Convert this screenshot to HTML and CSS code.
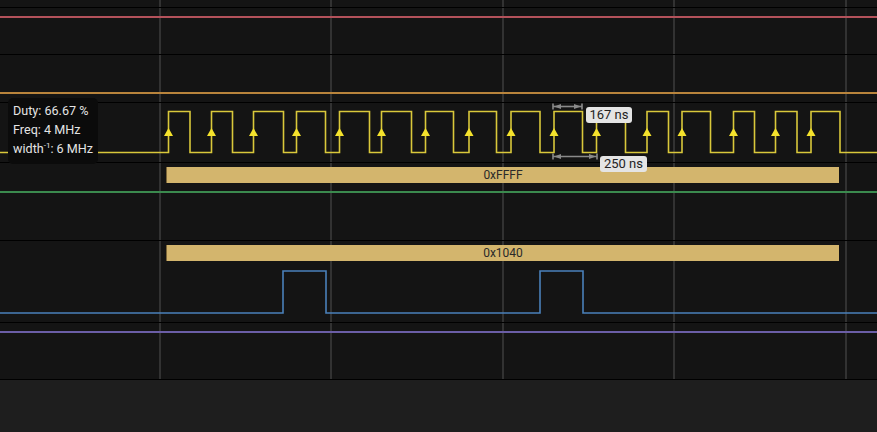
FILE: index.html
```html
<!DOCTYPE html>
<html>
<head>
<meta charset="utf-8">
<link rel="stylesheet" href="styles.css">
</head>
<body>
<div class="waves">
  <div class="row r0"></div>
  <div class="row r1"><div class="line red"></div></div>
  <div class="row r2"><div class="line orange"></div></div>
  <div class="row r3">
    <svg class="sig" width="877" height="59" viewBox="0 103 877 59">
      <path class="clk" d="M0 152.5 H168.5 V111.5 H190 V152.5 H211.5 V111.5 H232.5 V152.5 H253.5 V111.5 H283.5 V152.5 H296.5 V111.5 H325.5 V152.5 H339.5 V111.5 H369.5 V152.5 H381.5 V111.5 H411.5 V152.5 H425.5 V111.5 H453.5 V152.5 H469 V111.5 H496.5 V152.5 H511 V111.5 H540 V152.5 H554 V111.5 H582.5 V152.5 H596.5 V111.5 H625.5 V152.5 H647 V111.5 H668.5 V152.5 H682 V111.5 H710.5 V152.5 H733.5 V111.5 H754.5 V152.5 H775.5 V111.5 H797 V152.5 H811 V111.5 H840 V152.5 H877"/>
      <g class="tri">
        <polygon points="168.5,128 164,136 173,136"/>
        <polygon points="211.5,128 207,136 216,136"/>
        <polygon points="253.5,128 249,136 258,136"/>
        <polygon points="296.5,128 292,136 301,136"/>
        <polygon points="339.5,128 335,136 344,136"/>
        <polygon points="381.5,128 377,136 386,136"/>
        <polygon points="425.5,128 421,136 430,136"/>
        <polygon points="469,128 464.5,136 473.5,136"/>
        <polygon points="511,128 506.5,136 515.5,136"/>
        <polygon points="554,128 549.5,136 558.5,136"/>
        <polygon points="596.5,128 592,136 601,136"/>
        <polygon points="647,128 642.5,136 651.5,136"/>
        <polygon points="682,128 677.5,136 686.5,136"/>
        <polygon points="733.5,128 729,136 738,136"/>
        <polygon points="775.5,128 771,136 780,136"/>
        <polygon points="811,128 806.5,136 815.5,136"/>
      </g>
      <g class="meas">
        <line x1="553" y1="106.5" x2="582" y2="106.5"/>
        <line x1="553" y1="103.5" x2="553" y2="109.5"/>
        <line x1="582" y1="103.5" x2="582" y2="109.5"/>
        <polygon points="554,106.5 561,104 561,109"/>
        <polygon points="581,106.5 574,104 574,109"/>
        <line x1="553" y1="156.5" x2="597" y2="156.5"/>
        <line x1="553" y1="153.5" x2="553" y2="159.5"/>
        <line x1="597" y1="153.5" x2="597" y2="159.5"/>
        <polygon points="554,156.5 561,154 561,159"/>
        <polygon points="596,156.5 589,154 589,159"/>
      </g>
    </svg>
  </div>
  <div class="row r4">
    <div class="bar">0xFFFF</div>
    <div class="line green"></div>
  </div>
  <div class="row r5">
    <div class="bar">0x1040</div>
    <svg class="sig" width="877" height="61" viewBox="0 261 877 61">
      <path class="blue" d="M0 313 H283 V271 H326 V313 H540 V271 H583 V313 H877"/>
    </svg>
  </div>
  <div class="row r6"><div class="line purple"></div></div>

  <div class="tooltip">
    <div>Duty: 66.67 %</div>
    <div>Freq: 4 MHz</div>
    <div>width<sup>-1</sup>: 6 MHz</div>
  </div>
  <span class="mlabel m1">167 ns</span>
  <span class="mlabel m2">250 ns</span>
</div>
</body>
</html>
```
FILE: styles.css
```css
html, body {
  margin: 0;
  padding: 0;
  background: #1e1e1e;
  font-family: Roboto, "Noto Sans", sans-serif;
}
body {
  width: 877px;
  height: 432px;
  overflow: hidden;
}
.waves {
  position: relative;
  background-color: #141414;
  background-image:
    linear-gradient(#323232, #323232),
    linear-gradient(#323232, #323232),
    linear-gradient(#323232, #323232),
    linear-gradient(#323232, #323232),
    linear-gradient(#323232, #323232);
  background-size: 2px 100%;
  background-repeat: no-repeat;
  background-position: 159px 0, 330px 0, 502px 0, 673px 0, 845px 0;
}
.row {
  display: flow-root;
  border-bottom: 1px solid #000;
}
.r0 { height: 7px; }
.r1 { height: 46px; }
.r2 { height: 47px; }
.r3 { height: 59px; }
.r4 { height: 77px; }
.r5 { height: 81px; }
.r6 { height: 56px; }

.line { height: 2px; }
.red { margin-top: 8px; background: #b4525b; }
.orange { margin-top: 37px; background: #b9843c; }
.green { margin-top: 8px; background: #3b8a4e; }
.purple { margin-top: 8px; background: #6b5ea6; }

.sig { display: block; }
.clk {
  fill: none;
  stroke: #d9c83b;
  stroke-width: 1.6;
}
.tri polygon { fill: #f4e22c; }
.meas line { stroke: #8a8a8a; stroke-width: 1.6; }
.meas polygon { fill: #8a8a8a; }
.blue {
  fill: none;
  stroke: #4a80ba;
  stroke-width: 1.6;
}

.bar {
  box-sizing: border-box;
  margin: 4px 0 0 166px;
  width: 673px;
  height: 16px;
  line-height: 16px;
  background: #d3b56d;
  border-left: 1px solid #7a6538;
  color: #2a2a2a;
  font-size: 12px;
  text-align: center;
}

.tooltip {
  position: absolute;
  left: 8px;
  top: 98px;
  width: 90px;
  height: 66px;
  box-sizing: border-box;
  padding: 3px 0 0 5px;
  background: #0b0b0b;
  border-radius: 5px;
  color: #e4e4e4;
  font-size: 12.6px;
  line-height: 19px;
  white-space: nowrap;
}
.tooltip sup {
  font-size: 8px;
  line-height: 0;
  vertical-align: 5px;
}
.mlabel {
  position: absolute;
  height: 16px;
  line-height: 16px;
  padding: 0 3px;
  background: #e4e4e4;
  border-radius: 3px;
  color: #222;
  font-size: 13px;
  text-align: center;
}
.m1 { left: 586px; top: 107px; width: 40px; }
.m2 { left: 600px; top: 156px; width: 41px; }
```
